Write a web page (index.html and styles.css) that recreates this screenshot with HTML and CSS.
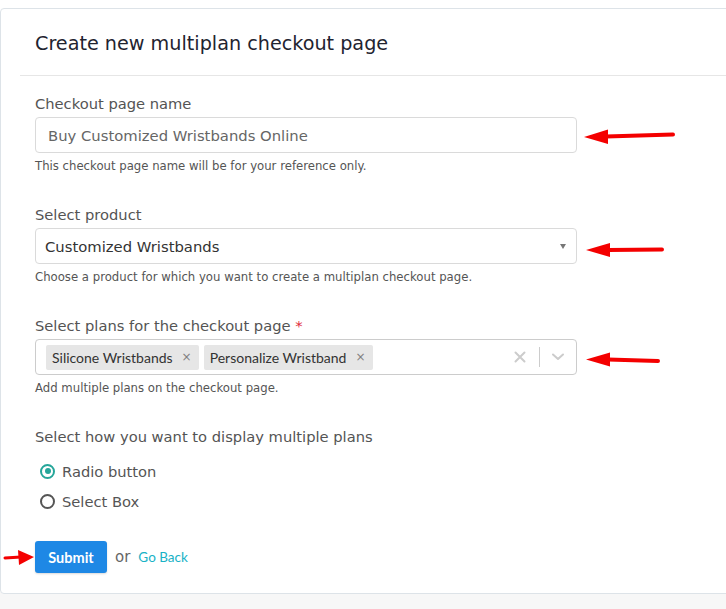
FILE: index.html
```html
<!DOCTYPE html>
<html>
<head>
<meta charset="utf-8">
<link rel="stylesheet" href="styles.css">
</head>
<body>
<div class="page">
  <div class="card">
    <div class="card-header">
      <h1 class="title">Create new multiplan checkout page</h1>
    </div>
    <div class="card-body">
      <div class="group">
        <div class="label">Checkout page name</div>
        <div class="control input">Buy Customized Wristbands Online</div>
        <div class="help">This checkout page name will be for your reference only.</div>
      </div>
      <div class="group">
        <div class="label">Select product</div>
        <div class="control select">
          <span class="value">Customized Wristbands</span>
          <span class="caret"></span>
        </div>
        <div class="help">Choose a product for which you want to create a multiplan checkout page.</div>
      </div>
      <div class="group">
        <div class="label">Select plans for the checkout page <span class="req">*</span></div>
        <div class="control multi">
          <div class="tags">
            <span class="tag">Silicone Wristbands <span class="tag-x">×</span></span>
            <span class="tag">Personalize Wristband <span class="tag-x">×</span></span>
          </div>
          <div class="indicators">
            <svg class="ind-clear" width="12" height="12" viewBox="0 0 12 12"><path d="M1.5 1.5 L10.5 10.5 M10.5 1.5 L1.5 10.5" stroke="#cccccc" stroke-width="2" stroke-linecap="round"/></svg>
            <span class="ind-sep"></span>
            <svg class="ind-chev" width="12" height="8" viewBox="0 0 12 8"><path d="M1 1.5 L6 6 L11 1.5" fill="none" stroke="#cccccc" stroke-width="2" stroke-linecap="round" stroke-linejoin="round"/></svg>
          </div>
        </div>
        <div class="help">Add multiple plans on the checkout page.</div>
      </div>
      <div class="group-display">
        <div class="label">Select how you want to display multiple plans</div>
        <div class="radios">
          <div class="radio-row"><span class="radio checked"></span><span class="radio-text">Radio button</span></div>
          <div class="radio-row"><span class="radio"></span><span class="radio-text">Select Box</span></div>
        </div>
      </div>
      <div class="actions">
        <span class="btn">Submit</span>
        <span class="or">or</span>
        <span class="back">Go Back</span>
      </div>
    </div>
  </div>

  <svg class="arrow a1" width="100" height="20" viewBox="0 0 100 20"><line x1="22" y1="9.5" x2="89" y2="7.5" stroke="#f40000" stroke-width="4" stroke-linecap="round"/><polygon points="0,10 24,2.5 24,17" fill="#f40000"/></svg>
  <svg class="arrow a2" width="100" height="20" viewBox="0 0 100 20"><line x1="22" y1="10" x2="76" y2="9.5" stroke="#f40000" stroke-width="4" stroke-linecap="round"/><polygon points="0,10 24,3 24,17" fill="#f40000"/></svg>
  <svg class="arrow a3" width="100" height="20" viewBox="0 0 100 20"><line x1="22" y1="9.5" x2="72" y2="11" stroke="#f40000" stroke-width="4" stroke-linecap="round"/><polygon points="0,9.5 24,2.5 24,16.5" fill="#f40000"/></svg>
  <svg class="arrow a4" width="36" height="20" viewBox="0 0 36 20"><line x1="2" y1="11" x2="18" y2="10" stroke="#f40000" stroke-width="3" stroke-linecap="round"/><polygon points="31,10 15,3 16,18" fill="#f40000"/></svg>
</div>
</body>
</html>
```

FILE: styles.css
```css
html, body {
  margin: 0;
  padding: 0;
}
body {
  background: #f7f7f7;
  font-family: "DejaVu Sans", "Liberation Sans", sans-serif;
  overflow: hidden;
  width: 726px;
  height: 609px;
}
.page {
  position: relative;
  padding-top: 8px;
  background: linear-gradient(#ffffff 0, #ffffff 20px, transparent 20px);
}
.card {
  width: 760px;
  background: #ffffff;
  border: 1px solid #dde3e8;
  border-radius: 4px;
  box-sizing: border-box;
}
.card-header {
  margin: 0 0 0 19px;
  padding: 0 15px;
  height: 66px;
  border-bottom: 1px solid #e6e6e6;
  display: flex;
  align-items: center;
}
.title {
  margin: 3px 0 0 0;
  font-size: 19.2px;
  font-weight: 400;
  color: #1f2430;
}
.card-body {
  padding: 18px 34px 20px 34px;
}
.group {
  margin-bottom: 31px;
}
.label {
  font-size: 14.7px;
  line-height: 20px;
  color: #545454;
  margin-bottom: 3px;
}
.req {
  color: #e0293a;
}
.control {
  width: 542px;
  height: 36px;
  box-sizing: border-box;
  border: 1px solid #dadada;
  border-radius: 4px;
  background: #ffffff;
  display: flex;
  align-items: center;
}
.input {
  padding-left: 12px;
  font-size: 14.8px;
  color: #666666;
}
.select {
  padding: 0 9px 0 9px;
  justify-content: space-between;
  font-size: 14.8px;
  color: #333333;
}
.caret {
  width: 0;
  height: 0;
  border-left: 3.5px solid transparent;
  border-right: 3.5px solid transparent;
  border-top: 5px solid #777777;
  margin-right: 1px;
}
.help {
  margin-top: 5px;
  font-size: 11.7px;
  line-height: 16px;
  color: #555555;
}
.multi {
  border-color: #cccccc;
  padding-left: 10px;
  justify-content: space-between;
}
.tags {
  display: flex;
  gap: 5px;
}
.tag {
  background: #e6e6e6;
  border-radius: 2px;
  height: 25px;
  display: flex;
  align-items: center;
  padding: 0 7px 0 6px;
  font-family: Lato, "Liberation Sans", sans-serif;
  font-size: 14px;
  color: #333333;
}
.tag-x {
  margin-left: 9px;
  color: #808080;
  font-family: "DejaVu Sans", sans-serif;
  font-size: 12px;
}
.indicators {
  display: flex;
  align-items: center;
  height: 100%;
}
.ind-clear {
  margin-right: 13px;
}
.ind-sep {
  width: 1px;
  height: 20px;
  background: #cccccc;
}
.ind-chev {
  margin: 0 12px 0 12px;
}
.group-display .label {
  margin-bottom: 9px;
}
.radio-row {
  height: 30px;
  display: flex;
  align-items: center;
}
.radio {
  width: 15px;
  height: 15px;
  box-sizing: border-box;
  border: 2px solid #555555;
  border-radius: 50%;
  margin-left: 5px;
  margin-right: 7px;
  position: relative;
}
.radio.checked {
  border-color: #26a69a;
}
.radio.checked::after {
  content: "";
  position: absolute;
  left: 2.5px;
  top: 2.5px;
  width: 6px;
  height: 6px;
  border-radius: 50%;
  background: #26a69a;
}
.radio-text {
  font-size: 14.7px;
  color: #555555;
}
.actions {
  margin-top: 25px;
  display: flex;
  align-items: center;
}
.btn {
  width: 72px;
  height: 32px;
  background: #1e88e5;
  border-radius: 3px;
  color: #ffffff;
  font-family: Lato, "Liberation Sans", sans-serif;
  font-size: 14.5px;
  font-weight: 700;
  display: flex;
  align-items: center;
  justify-content: center;
  box-shadow: 0 1px 2px rgba(0,0,0,0.15);
}
.or {
  margin-left: 8px;
  font-size: 15px;
  color: #666666;
}
.back {
  margin-left: 8px;
  font-family: Lato, "Liberation Sans", sans-serif;
  font-size: 13.5px;
  color: #19b2c6;
}
.arrow {
  position: absolute;
}
.a1 { left: 584px; top: 127px; }
.a2 { left: 586px; top: 240px; }
.a3 { left: 586px; top: 350px; }
.a4 { left: 3px; top: 547px; }
```
